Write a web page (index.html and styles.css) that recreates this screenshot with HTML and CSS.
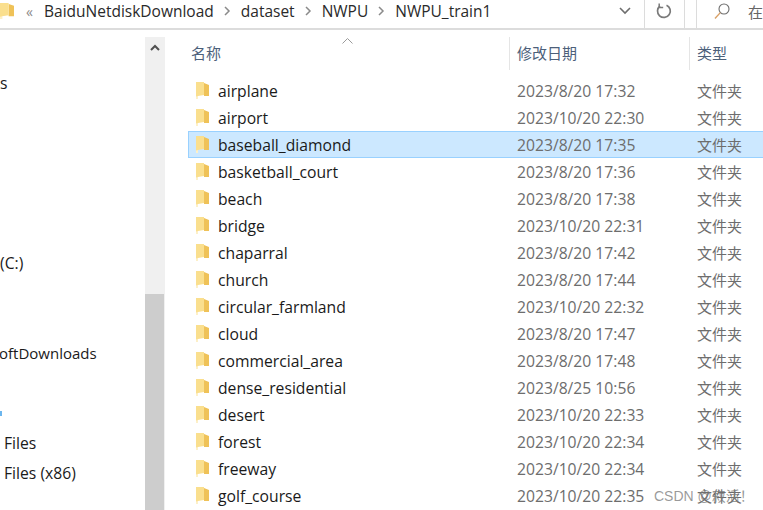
FILE: index.html
```html
<!DOCTYPE html>
<html lang="zh-CN">
<head>
<meta charset="UTF-8" />
<title>NWPU_train1</title>
<link rel="stylesheet" href="styles.css">
</head>
<body>
  <div class="toolbar">
    <div class="address">
      <svg class="addr-folder"><use href="#folder"/></svg>
      <span class="addr-more">«</span>
      <span class="crumb">BaiduNetdiskDownload</span>
      <svg class="crumb-sep" width="7" height="10" viewBox="0 0 7 10"><path d="M1 1l4 4-4 4" fill="none" stroke="#8a8a8a" stroke-width="1.5"/></svg>
      <span class="crumb">dataset</span>
      <svg class="crumb-sep" width="7" height="10" viewBox="0 0 7 10"><path d="M1 1l4 4-4 4" fill="none" stroke="#8a8a8a" stroke-width="1.5"/></svg>
      <span class="crumb">NWPU</span>
      <svg class="crumb-sep" width="7" height="10" viewBox="0 0 7 10"><path d="M1 1l4 4-4 4" fill="none" stroke="#8a8a8a" stroke-width="1.5"/></svg>
      <span class="crumb">NWPU_train1</span>
      <svg class="addr-drop" width="12" height="8" viewBox="0 0 12 8"><path d="M1 1l5 5 5-5" fill="none" stroke="#6e6e6e" stroke-width="1.6"/></svg>
    </div>
    <div class="refresh">
      <svg width="16" height="16" viewBox="0 0 16 16"><path d="M10.5 2.2A6.4 6.4 0 1 1 4 3" fill="none" stroke="#7a7a7a" stroke-width="1.7"/><path d="M3.2 0.5v4h4" fill="none" stroke="#7a7a7a" stroke-width="1.5"/></svg>
    </div>
    <div class="gap"></div>
    <div class="search">
      <svg width="16" height="17" viewBox="0 0 16 17"><circle cx="10" cy="6" r="5" fill="none" stroke="#6e6e6e" stroke-width="1.1"/><path d="M6.3 9.6L1 15.5" stroke="#d9a066" stroke-width="1.4"/></svg>
      <span class="search-text">在</span>
    </div>
  </div>

  <div class="main">
    <div class="nav">
      <div class="nav-row">s</div>
      <div class="nav-row"></div>
      <div class="nav-row"></div>
      <div class="nav-row"></div>
      <div class="nav-row"></div>
      <div class="nav-row"></div>
      <div class="nav-row">(C:)</div>
      <div class="nav-row"></div>
      <div class="nav-row"></div>
      <div class="nav-row nav-cut">oftDownloads</div>
      <div class="nav-row"></div>
      <div class="nav-row"><span class="nav-mark"></span></div>
      <div class="nav-row nav-files">Files</div>
      <div class="nav-row nav-files">Files (x86)</div>
    </div>

    <div class="scrollbar">
      <div class="scroll-up">
        <svg width="10" height="7" viewBox="0 0 10 7"><path d="M1 6l4-4 4 4" fill="none" stroke="#505050" stroke-width="2"/></svg>
      </div>
      <div class="scroll-track"></div>
      <div class="scroll-thumb"></div>
    </div>

    <div class="list">
      <div class="list-head">
        <div class="col-name">
          名称
          <svg class="sort" width="11" height="6" viewBox="0 0 11 6"><path d="M.5 5.5l5-5 5 5" fill="none" stroke="#9a9a9a"/></svg>
        </div>
        <div class="col-date">修改日期</div>
        <div class="col-type">类型</div>
      </div>

      <div class="row"><svg class="folder"><use href="#folder"/></svg><span class="name">airplane</span><span class="date">2023/8/20 17:32</span><span class="type">文件夹</span></div>
      <div class="row"><svg class="folder"><use href="#folder"/></svg><span class="name">airport</span><span class="date">2023/10/20 22:30</span><span class="type">文件夹</span></div>
      <div class="row selected"><svg class="folder"><use href="#folder"/></svg><span class="name">baseball_diamond</span><span class="date">2023/8/20 17:35</span><span class="type">文件夹</span></div>
      <div class="row"><svg class="folder"><use href="#folder"/></svg><span class="name">basketball_court</span><span class="date">2023/8/20 17:36</span><span class="type">文件夹</span></div>
      <div class="row"><svg class="folder"><use href="#folder"/></svg><span class="name">beach</span><span class="date">2023/8/20 17:38</span><span class="type">文件夹</span></div>
      <div class="row"><svg class="folder"><use href="#folder"/></svg><span class="name">bridge</span><span class="date">2023/10/20 22:31</span><span class="type">文件夹</span></div>
      <div class="row"><svg class="folder"><use href="#folder"/></svg><span class="name">chaparral</span><span class="date">2023/8/20 17:42</span><span class="type">文件夹</span></div>
      <div class="row"><svg class="folder"><use href="#folder"/></svg><span class="name">church</span><span class="date">2023/8/20 17:44</span><span class="type">文件夹</span></div>
      <div class="row"><svg class="folder"><use href="#folder"/></svg><span class="name">circular_farmland</span><span class="date">2023/10/20 22:32</span><span class="type">文件夹</span></div>
      <div class="row"><svg class="folder"><use href="#folder"/></svg><span class="name">cloud</span><span class="date">2023/8/20 17:47</span><span class="type">文件夹</span></div>
      <div class="row"><svg class="folder"><use href="#folder"/></svg><span class="name">commercial_area</span><span class="date">2023/8/20 17:48</span><span class="type">文件夹</span></div>
      <div class="row"><svg class="folder"><use href="#folder"/></svg><span class="name">dense_residential</span><span class="date">2023/8/25 10:56</span><span class="type">文件夹</span></div>
      <div class="row"><svg class="folder"><use href="#folder"/></svg><span class="name">desert</span><span class="date">2023/10/20 22:33</span><span class="type">文件夹</span></div>
      <div class="row"><svg class="folder"><use href="#folder"/></svg><span class="name">forest</span><span class="date">2023/10/20 22:34</span><span class="type">文件夹</span></div>
      <div class="row"><svg class="folder"><use href="#folder"/></svg><span class="name">freeway</span><span class="date">2023/10/20 22:34</span><span class="type">文件夹</span></div>
      <div class="row"><svg class="folder"><use href="#folder"/></svg><span class="name">golf_course</span><span class="date">2023/10/20 22:35</span><span class="type">文件夹</span></div>
    </div>
  </div>

  <div class="watermark">CSDN @寂活！</div>

  <svg width="0" height="0" class="defs">
    <symbol id="folder" viewBox="0 0 13 17" preserveAspectRatio="none">
      <path d="M8 1l5 2v11H8z" fill="#efc258"/>
      <path d="M0 0h8v13L2 14v3H0z" fill="#fadf8e"/>
      <path d="M0 14.5L2 14v3H0z" fill="#fdf0c8"/>
    </symbol>
  </svg>
</body>
</html>
```

FILE: styles.css
```css
html, body {
  margin: 0;
  height: 100%;
  overflow: hidden;
}

body {
  font-family: "Open Sans", "Noto Sans CJK SC", sans-serif;
  font-size: 15.7px;
  color: #1a1a1a;
  background-color: #fff;
  position: relative;
}

.defs {
  position: absolute;
}

.toolbar {
  display: flex;
  height: 28px;
  border-bottom: 2px solid #dcdcdc;
}

.address {
  width: 644px;
  display: flex;
  align-items: center;
  padding-bottom: 6px;
  box-sizing: content-box;
  border-right: 1px solid #dcdcdc;
}

.addr-folder {
  width: 14px;
  height: 16px;
  flex: none;
}

.addr-more {
  margin-left: 12px;
  width: 18px;
  color: #8a8a8a;
  font-size: 14px;
}

.crumb {
  white-space: nowrap;
  font-size: 15.5px;
  color: #2a2a2a;
}

.crumb-sep {
  margin: 0 10px;
  flex: none;
}

.addr-drop {
  margin-left: auto;
  margin-right: 13px;
  flex: none;
}

.refresh {
  width: 39px;
  display: flex;
  align-items: center;
  justify-content: center;
  padding-bottom: 6px;
  border-right: 1px solid #dcdcdc;
}

.gap {
  width: 11px;
}

.search {
  flex: 1;
  display: flex;
  align-items: center;
  padding-left: 17px;
  padding-bottom: 6px;
  border-left: 1px solid #dcdcdc;
}

.search-text {
  margin-left: 18px;
  color: #666;
  font-size: 15px;
}

.main {
  display: flex;
  height: 480px;
}

.nav {
  width: 145px;
  padding-top: 38px;
  flex: none;
  overflow: hidden;
}

.nav-row {
  height: 30px;
  line-height: 30px;
  white-space: nowrap;
  display: flex;
  align-items: center;
}

.nav-cut {
  margin-left: -1px;
  font-size: 15px;
}

.nav-files {
  padding-left: 4px;
}

.nav-mark {
  width: 2px;
  height: 5px;
  background-color: #6cb6ee;
}

.scrollbar {
  width: 20px;
  flex: none;
  margin-top: 7px;
  display: flex;
  flex-direction: column;
  background-color: #f0f0f0;
}

.scroll-up {
  height: 20px;
  display: flex;
  align-items: center;
  justify-content: center;
}

.scroll-track {
  height: 237px;
}

.scroll-thumb {
  flex: 1;
  width: 19px;
  background-color: #cdcdcd;
}

.list {
  flex: 1;
  min-width: 0;
  padding: 7px 0 0 23px;
}

.list-head {
  display: flex;
  height: 33px;
  margin-bottom: 7px;
  color: #4c607a;
  font-size: 15px;
}

.col-name {
  width: 318px;
  padding-left: 3px;
  line-height: 32px;
  position: relative;
}

.sort {
  position: absolute;
  left: 154px;
  top: 1px;
}

.col-date {
  width: 172px;
  padding-left: 7px;
  line-height: 32px;
  border-left: 1px solid #e5e5e5;
}

.col-type {
  flex: 1;
  padding-left: 7px;
  line-height: 32px;
  border-left: 1px solid #e5e5e5;
}

.row {
  display: flex;
  align-items: center;
  height: 27px;
  box-sizing: border-box;
  border: 1px solid transparent;
  border-width: 1px 0;
}

.row.selected {
  background-color: #cce8ff;
  border: 1px solid #99d1ff;
  border-right: none;
}

.folder {
  width: 13px;
  height: 17px;
  margin-left: 8px;
  flex: none;
}

.row.selected .folder {
  margin-left: 7px;
}

.name {
  width: 299px;
  margin-left: 9px;
  white-space: nowrap;
}

.date {
  width: 180px;
  color: #6d6d6d;
  white-space: nowrap;
}

.type {
  color: #6d6d6d;
  font-size: 15px;
  white-space: nowrap;
}

.watermark {
  position: absolute;
  left: 654px;
  top: 485px;
  font-size: 14px;
  color: rgba(120, 120, 120, 0.75);
  white-space: nowrap;
  font-family: "Liberation Sans", "Noto Sans CJK SC", sans-serif;
}
```
